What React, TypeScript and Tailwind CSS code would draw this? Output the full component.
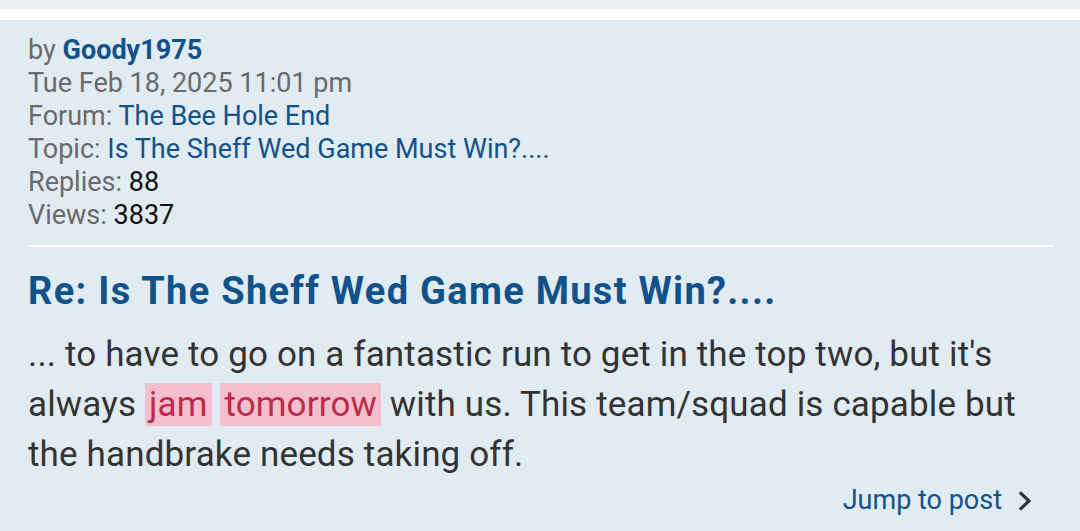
export default function App() {
  return (
    <div className="w-[1080px] h-[531px] overflow-hidden bg-[#e1ebf2] font-['Roboto',sans-serif]">
      <div className="h-[9px] bg-[#e9f0f5]" />
      <div className="h-[11px] bg-white" />

      {/* Search result row */}
      <div className="pl-[28px] pr-[26px] pt-[14px]">
        <div className="text-[27px] leading-[33px] text-[#6a6a6a]">
          <div>
            by <a className="font-bold text-[#105289]">Goody1975</a>
          </div>
          <div>Tue Feb 18, 2025 11:01 pm</div>
          <div>
            Forum: <a className="text-[#105289]">The Bee Hole End</a>
          </div>
          <div>
            Topic: <a className="text-[#105289]">Is The Sheff Wed Game Must Win?....</a>
          </div>
          <div>
            Replies: <span className="text-[#111111]">88</span>
          </div>
          <div>
            Views: <span className="text-[#111111]">3837</span>
          </div>
        </div>

        <div className="mt-[13px] h-[2px] bg-white" />

        <h3 className="mt-[22px] text-[38px] leading-[44px] font-bold tracking-[1.3px] text-[#105289]">
          Re: Is The Sheff Wed Game Must Win?....
        </h3>

        <p className="mt-[17px] text-[35px] leading-[50px] tracking-[0.15px] text-[#333333]">
          ... to have to go on a fantastic run to get in the top two, but it's always{" "}
          <span className="bg-[#f3bfcc] px-[4px] py-[1px] text-[#bc2a4d]">jam</span>{" "}
          <span className="bg-[#f3bfcc] px-[4px] py-[1px] text-[#bc2a4d]">tomorrow</span> with us. This
          team/squad is capable but the handbrake needs taking off.
        </p>

        <div className="mt-[4px] flex justify-end pr-[22px]">
          <a className="flex items-center gap-[16px] text-[27px] leading-[33px] text-[#105289]">
            Jump to post
            <svg width="14" height="20" viewBox="0 0 14 20" fill="none">
              <path d="M3 2.5 L11 10 L3 17.5" stroke="#333333" strokeWidth="3.2" strokeLinecap="square" />
            </svg>
          </a>
        </div>
      </div>
    </div>
  );
}
